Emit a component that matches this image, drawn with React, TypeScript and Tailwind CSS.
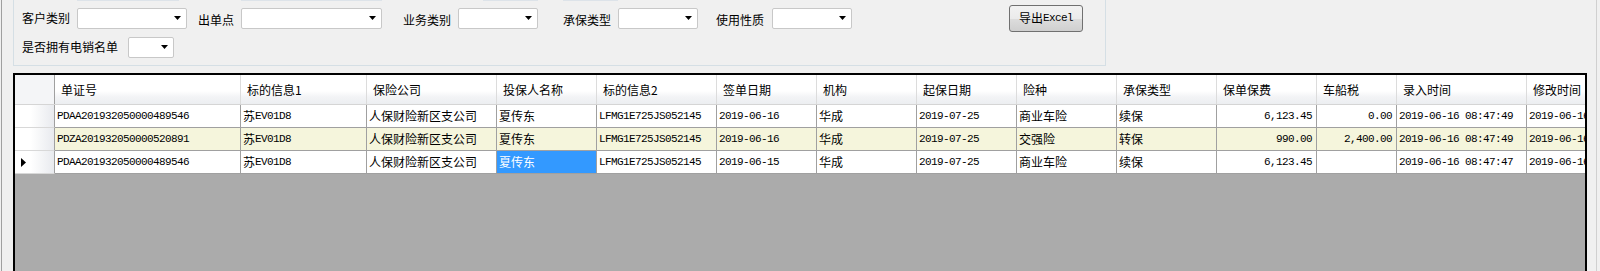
// 保单查询窗体：上方筛选条件 + 下方数据表格
import React from 'react'

type Col = { title: string; w: string; right?: boolean }

const columns: Col[] = [
  { title: '单证号', w: 'w-[186px]' },
  { title: '标的信息1', w: 'w-[126px]' },
  { title: '保险公司', w: 'w-[130px]' },
  { title: '投保人名称', w: 'w-[100px]' },
  { title: '标的信息2', w: 'w-[120px]' },
  { title: '签单日期', w: 'w-[100px]' },
  { title: '机构', w: 'w-[100px]' },
  { title: '起保日期', w: 'w-[100px]' },
  { title: '险种', w: 'w-[100px]' },
  { title: '承保类型', w: 'w-[100px]' },
  { title: '保单保费', w: 'w-[100px]', right: true },
  { title: '车船税', w: 'w-[80px]', right: true },
  { title: '录入时间', w: 'w-[130px]' },
  { title: '修改时间', w: 'w-[100px]' },
]

const rows: string[][] = [
  ['PDAA201932050000489546', '苏EV01D8', '人保财险新区支公司', '夏传东', 'LFMG1E725JS052145', '2019-06-16', '华成', '2019-07-25', '商业车险', '续保', '6,123.45', '0.00', '2019-06-16 08:47:49', '2019-06-16 08:47:49'],
  ['PDZA201932050000520891', '苏EV01D8', '人保财险新区支公司', '夏传东', 'LFMG1E725JS052145', '2019-06-16', '华成', '2019-07-25', '交强险', '转保', '990.00', '2,400.00', '2019-06-16 08:47:49', '2019-06-16 08:47:49'],
  ['PDAA201932050000489546', '苏EV01D8', '人保财险新区支公司', '夏传东', 'LFMG1E725JS052145', '2019-06-15', '华成', '2019-07-25', '商业车险', '续保', '6,123.45', '', '2019-06-16 08:47:47', '2019-06-16 08:47:47'],
]

// 中文用黑体，西文/数字用等宽字体（模仿宋体半角 6px 宽）
function Mixed({ text }: { text: string }) {
  const parts = text.split(/([\u3400-\u9fff]+)/).filter((p) => p !== '')
  return (
    <>
      {parts.map((p, i) =>
        /[\u3400-\u9fff]/.test(p) ? (
          <span key={i} className="text-[12px]">{p}</span>
        ) : (
          <span key={i} className="font-['Liberation_Mono',monospace] text-[11px] tracking-[-0.6px]">{p}</span>
        )
      )}
    </>
  )
}

function Combo({ w }: { w: string }) {
  return (
    <div className={`${w} h-[21px] bg-white border border-[#c8c8c8] rounded-[2px] flex items-center justify-end pr-[5px]`}>
      <svg width="7" height="4" viewBox="0 0 7 4">
        <path d="M0 0H7L3.5 4Z" fill="#000" />
      </svg>
    </div>
  )
}

function Label({ text, w }: { text: string; w: string }) {
  return <span className={`${w} shrink-0 text-[12px] leading-none`}>{text}</span>
}

export default function App() {
  return (
    <div className="w-[1600px] h-[271px] overflow-hidden bg-[#f0f0f0] pl-[1px] font-['Noto_Sans_CJK_SC',sans-serif] text-black">
      <div className="w-[1596px] h-full border-l border-r border-l-[#a0a0a0] border-r-[#d0d0d0] pl-[11px]">
        {/* 筛选条件 */}
        <div className="w-[1093px] h-[66px] border-l border-r border-b border-[#d5dfe5]">
          <div className="flex h-[1px]">
            <div className="ml-[63px] w-[102px] bg-[#dde3e9]" />
            <div className="ml-[62px] w-[141px] bg-[#dde3e9]" />
            <div className="ml-[101px] w-[55px] bg-[#dde3e9]" />
            <div className="ml-[25px] w-[55px] bg-[#dde3e9]" />
          </div>
          <div className="mt-[1px] h-[32px] flex items-center pl-[8px]">
            <Label text="客户类别" w="w-[48px]" />
            <div className="ml-[7px]"><Combo w="w-[110px]" /></div>
            <div className="ml-[11px]"><Label text="出单点" w="w-[36px]" /></div>
            <div className="ml-[7px]"><Combo w="w-[141px]" /></div>
            <div className="ml-[21px]"><Label text="业务类别" w="w-[48px]" /></div>
            <div className="ml-[7px]"><Combo w="w-[80px]" /></div>
            <div className="ml-[25px]"><Label text="承保类型" w="w-[48px]" /></div>
            <div className="ml-[7px]"><Combo w="w-[80px]" /></div>
            <div className="ml-[18px]"><Label text="使用性质" w="w-[48px]" /></div>
            <div className="ml-[8px]"><Combo w="w-[80px]" /></div>
            <button className="ml-[157px] w-[74px] h-[27px] border border-[#707070] rounded-[3px] bg-[linear-gradient(#f2f2f2_0%,#ebebeb_50%,#dddddd_51%,#cfcfcf_100%)] flex items-center justify-center leading-none">
              <Mixed text="导出Excel" />
            </button>
          </div>
          <div className="mt-[1px] h-[24px] flex items-center pl-[8px]">
            <Label text="是否拥有电销名单" w="w-[96px]" />
            <div className="ml-[10px]"><Combo w="w-[46px]" /></div>
          </div>
        </div>

        {/* 数据表格 */}
        <div className="mt-[7px] w-[1574px] h-[210px] border-l-2 border-t-2 border-r-2 border-black bg-[#ababab] overflow-hidden">
          <div className="flex h-[30px] w-max bg-[linear-gradient(#ffffff_0%,#ffffff_55%,#f3f4f6_75%,#eceef1_100%)] border-b border-[#d5d5d5]">
            <div className="w-[40px] shrink-0 border-r border-[#a0a0a0] bg-[#f4f5f7]" />
            {columns.map((c) => (
              <div key={c.title} className={`${c.w} shrink-0 border-r border-[#dcdcdc] flex items-center pl-[6px] text-[12px] leading-none whitespace-nowrap`}>
                {c.title}
              </div>
            ))}
          </div>
          {rows.map((r, ri) => (
            <div key={ri} className={`flex h-[23px] w-max ${ri === 1 ? 'bg-[#f5f5dc]' : 'bg-white'}`}>
              <div className="w-[40px] shrink-0 border-r border-b border-r-[#a0a0a0] border-b-[#d8d8d8] bg-[linear-gradient(to_right,#ffffff,#ffffff_40%,#e8eaee)] flex items-center pl-[6px]">
                {ri === 2 && (
                  <svg width="5" height="9" viewBox="0 0 5 9">
                    <path d="M0 0L5 4.5L0 9Z" fill="#000" />
                  </svg>
                )}
              </div>
              {columns.map((c, ci) => {
                const selected = ri === 2 && ci === 3
                return (
                  <div
                    key={ci}
                    className={`${c.w} shrink-0 border-r border-b border-[#a0a0a0] flex items-center leading-none whitespace-nowrap overflow-hidden ${c.right ? 'justify-end pr-[4px]' : 'pl-[2px]'} ${selected ? 'bg-[#3399ff] text-white' : ''}`}
                  >
                    <Mixed text={r[ci]} />
                  </div>
                )
              })}
            </div>
          ))}
        </div>
      </div>
    </div>
  )
}
